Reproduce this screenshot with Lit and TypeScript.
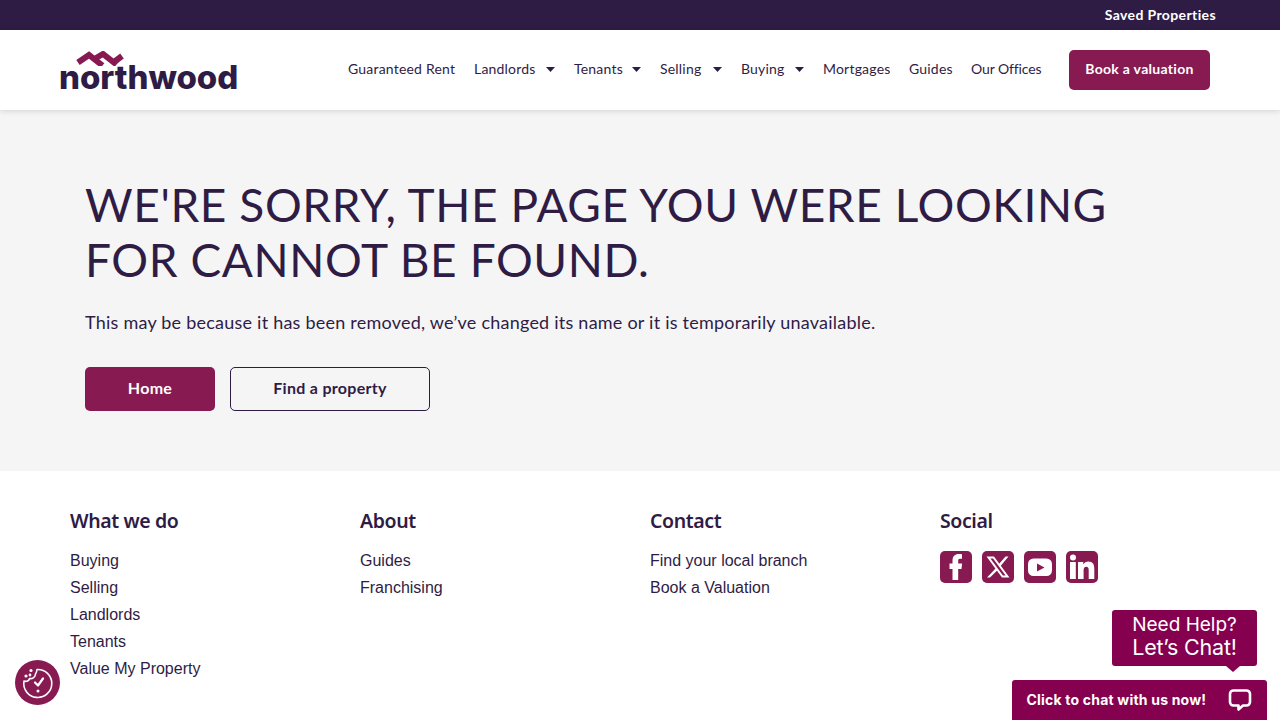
import { LitElement, css, html } from 'lit';
import { customElement } from 'lit/decorators.js';
import { styleMap } from 'lit/directives/style-map.js';

// w = measured label width, the stand-in font runs a little off per word
const NAV = [
  { label: 'Guaranteed Rent', w: 107 },
  { label: 'Landlords', w: 63, caret: true },
  { label: 'Tenants', w: 49, caret: true },
  { label: 'Selling', w: 44, caret: true },
  { label: 'Buying', w: 45, caret: true },
  { label: 'Mortgages', w: 67 },
  { label: 'Guides', w: 43 },
  { label: 'Our Offices', w: 71, ls: '-0.1px' },
];

const FOOTER = [
  { title: 'What we do', links: ['Buying', 'Selling', 'Landlords', 'Tenants', 'Value My Property'] },
  { title: 'About', links: ['Guides', 'Franchising'] },
  { title: 'Contact', links: ['Find your local branch', 'Book a Valuation'] },
];

@customElement('app-root')
export class AppRoot extends LitElement {
  static styles = css`
    :host {
      display: block;
      height: 720px;
      overflow: hidden;
      position: relative;
      background: #fff;
      color: #2f1c45;
      font-family: 'Lato', sans-serif;
    }
    a { color: inherit; text-decoration: none; }
    .topbar {
      height: 30px;
      box-sizing: border-box;
      padding: 0 64px 2px 0;
      background: #2f1c45;
      color: #fff;
      display: flex;
      align-items: center;
      justify-content: flex-end;
      font-size: 14px;
      font-weight: 700;
      letter-spacing: 0.38px;
    }
    .header {
      height: 80px;
      box-sizing: border-box;
      display: flex;
      align-items: center;
      justify-content: space-between;
      padding: 0 70px 0 60px;
      background: #fff;
      box-shadow: 0 1px 6px rgba(0, 0, 0, 0.14);
      position: relative;
    }
    .logo { display: flex; flex-direction: column; width: 178px; }
    .logo svg { display: block; margin-left: 16px; }
    .logo-word {
      font-family: 'Inter', sans-serif;
      font-size: 33px;
      font-weight: 800;
      line-height: 24px;
      letter-spacing: -0.05px;
      color: #2f1c45;
      margin-top: -1px;
      margin-left: -1px;
    }
    .nav { display: flex; align-items: center; gap: 19px; font-size: 14px; letter-spacing: 0.2px; }
    .nav-item { display: flex; align-items: center; gap: 9px; white-space: nowrap; padding-bottom: 4px; }
    .caret { width: 9px; height: 5px; margin-top: 3px; background: #2f1c45; clip-path: polygon(0 0, 100% 0, 50% 100%); }
    .btn-book {
      margin-left: 8px;
      box-sizing: border-box;
      padding-bottom: 3px;
      background: #861a51;
      color: #fff;
      font-size: 14px;
      font-weight: 700;
      letter-spacing: 0.3px;
      width: 141px;
      height: 40px;
      border-radius: 5px;
      display: flex;
      align-items: center;
      justify-content: center;
    }
    .main {
      height: 361px;
      box-sizing: border-box;
      background: #f5f5f6;
      padding: 68px 85px 0;
    }
    h1 {
      margin: 0;
      font-size: 46px;
      line-height: 54.5px;
      font-weight: 400;
      letter-spacing: 0.6px;
    }
    .lead { margin: 22px 0 0; font-size: 18px; line-height: 26px; letter-spacing: 0.23px; }
    .actions { display: flex; gap: 15px; margin-top: 32px; }
    .btn {
      height: 44px;
      box-sizing: border-box;
      padding-bottom: 4px;
      border-radius: 5px;
      display: flex;
      align-items: center;
      justify-content: center;
      font-size: 16px;
      font-weight: 700;
      letter-spacing: 0.3px;
    }
    .btn.primary { width: 130px; background: #861a51; color: #fff; }
    .btn.outline { width: 200px; border: 1px solid #2f1c45; }
    .footer {
      display: grid;
      grid-template-columns: repeat(4, 290px);
      padding: 36px 0 0 70px;
    }
    h3 {
      margin: 0 0 13px;
      font-family: 'Noto Sans', sans-serif;
      font-size: 19.5px;
      line-height: 27px;
      font-weight: 600;
      letter-spacing: -0.4px;
    }
    .links { display: flex; flex-direction: column; }
    .links a {
      font-family: 'Liberation Sans', sans-serif;
      font-size: 16px;
      line-height: 27px;
    }
    .social { display: flex; gap: 10px; margin-top: 17px; }
    .social svg { display: block; }
    .cookie {
      position: absolute;
      left: 15px;
      top: 660px;
      width: 45px;
      height: 45px;
      border-radius: 50%;
      background: #861a51;
      display: flex;
      align-items: center;
      justify-content: center;
    }
    .bubble {
      position: absolute;
      left: 1112px;
      top: 610px;
      width: 145px;
      height: 56px;
      box-sizing: border-box;
      border-radius: 3px;
      background: #85004f;
      color: #fff;
      font-family: 'Inter', sans-serif;
      font-size: 19px;
      line-height: 22.5px;
      text-align: center;
      padding-top: 4px;
    }
    .bubble .big { display: block; margin-top: -1px; font-size: 21.5px; letter-spacing: -0.2px; }
    .bubble::after {
      content: '';
      position: absolute;
      left: 114px;
      bottom: -6px;
      border: 7px solid transparent;
      border-top: 6px solid #85004f;
      border-bottom: 0;
    }
    .chat {
      position: absolute;
      left: 1012px;
      top: 680px;
      width: 255px;
      height: 40px;
      box-sizing: border-box;
      border-radius: 3px 3px 0 0;
      background: #85004f;
      color: #fff;
      display: flex;
      align-items: center;
      justify-content: space-between;
      padding: 0 15px 2px 14.5px;
      font-family: 'Inter', sans-serif;
      font-size: 14px;
      font-weight: 700;
      letter-spacing: 0.2px;
    }
    .chat svg { margin-top: 2px; }
  `;

  private renderLogoMark() {
    return html`<svg width="48" height="15" viewBox="0 0 48 15" fill="none" stroke="#861a51" stroke-width="6">
      <path d="M2 11.500 13 4 26.500 14.500"/>
      <path d="M20 7 27 3 40.500 13.500"/>
      <path d="M38 11 46 5"/>
    </svg>`;
  }

  private renderSocial() {
    return html`<div class="social">
      <svg width="32" height="32" viewBox="0 0 32 32">
        <rect width="32" height="32" rx="5" fill="#861a51"/>
        <path fill="#fff" d="M12.500 29V18H9.500v-5.500h3V9.500C12.500 5.300 15 3 18.800 3c1.500 0 2.800.1 3.200.2v4.600h-2c-1.500 0-1.800.8-1.800 2v2.700h3.900l-.6 5.500h-3.300v11z"/>
      </svg>
      <svg width="32" height="32" viewBox="0 0 32 32">
        <rect width="32" height="32" rx="5" fill="#861a51"/>
        <path fill="none" stroke="#fff" stroke-width="2" d="M6.500 6.500h5l14 19h-5z"/>
        <path fill="#fff" d="M23.500 5.500h3L18 15.800l-1.700-2.100zM14 17l1.700 2.100L8 26.500H5z"/>
      </svg>
      <svg width="32" height="32" viewBox="0 0 32 32">
        <rect width="32" height="32" rx="5" fill="#861a51"/>
        <rect x="4" y="7.500" width="24" height="17.500" rx="5.500" fill="#fff"/>
        <path fill="#861a51" d="M13 12.500v8l7.500-4z"/>
      </svg>
      <svg width="32" height="32" viewBox="0 0 32 32">
        <rect width="32" height="32" rx="5" fill="#861a51"/>
        <circle cx="7" cy="6.500" r="3" fill="#fff"/>
        <path fill="#fff" d="M4 11h5.800v17H4zM12 11h5.300v2.400c1-1.700 2.900-2.800 5-2.800 4.600 0 6 3 6 7.200V28h-5.600v-8.800c0-2-.6-3.500-2.400-3.500-2 0-2.700 1.600-2.700 3.500V28H12z"/>
      </svg>
    </div>`;
  }

  render() {
    return html`
      <div class="topbar"><a>Saved Properties</a></div>
      <header class="header">
        <a class="logo">
          ${this.renderLogoMark()}
          <span class="logo-word">northwood</span>
        </a>
        <nav class="nav">
          ${NAV.map(n => html`<a class="nav-item"><span style=${styleMap({ width: `${n.w}px`, letterSpacing: n.ls ?? null })}>${n.label}</span>${n.caret ? html`<span class="caret"></span>` : ''}</a>`)}
          <a class="btn-book">Book a valuation</a>
        </nav>
      </header>
      <main class="main">
        <h1>WE'RE SORRY, THE PAGE YOU WERE LOOKING<br />FOR CANNOT BE FOUND.</h1>
        <p class="lead">This may be because it has been removed, we’ve changed its name or it is temporarily unavailable.</p>
        <div class="actions">
          <a class="btn primary">Home</a>
          <a class="btn outline">Find a property</a>
        </div>
      </main>
      <footer class="footer">
        ${FOOTER.map(col => html`<div>
          <h3>${col.title}</h3>
          <div class="links">${col.links.map(l => html`<a>${l}</a>`)}</div>
        </div>`)}
        <div>
          <h3>Social</h3>
          ${this.renderSocial()}
        </div>
      </footer>
      <div class="cookie">
        <svg width="32" height="32" viewBox="0 0 32 32" fill="none" stroke="#fff" stroke-width="1.600" stroke-linecap="round" stroke-linejoin="round">
          <path d="M15 2.500A14 14 0 1 1 2 14c2.500 1 5 0 5.500-2.500 3 .5 6-1.500 6-4.500 .8-1 1.300-2.500 1.500-4.500z"/>
          <path stroke-width="2.200" d="M13 15.500l3 3 5-7"/>
          <circle cx="16" cy="24" r=".7"/>
          <circle cx="9" cy="3.500" r=".8"/>
          <circle cx="4" cy="9" r=".8"/>
          <circle cx="8" cy="8" r=".6"/>
        </svg>
      </div>
      <div class="bubble">Need Help?<span class="big">Let’s Chat!</span></div>
      <div class="chat">
        <span>Click to chat with us now!</span>
        <svg width="24" height="24" viewBox="0 0 24 24" fill="none" stroke="#fff" stroke-width="2.600" stroke-linejoin="round">
          <path d="M5.500 2.500h13a3.500 3.500 0 0 1 3.500 3.500v8a3.500 3.500 0 0 1-3.500 3.500h-3.500l-4.500 4v-4H5.500A3.500 3.500 0 0 1 2 14V6a3.500 3.500 0 0 1 3.500-3.500z"/>
        </svg>
      </div>
    `;
  }
}
